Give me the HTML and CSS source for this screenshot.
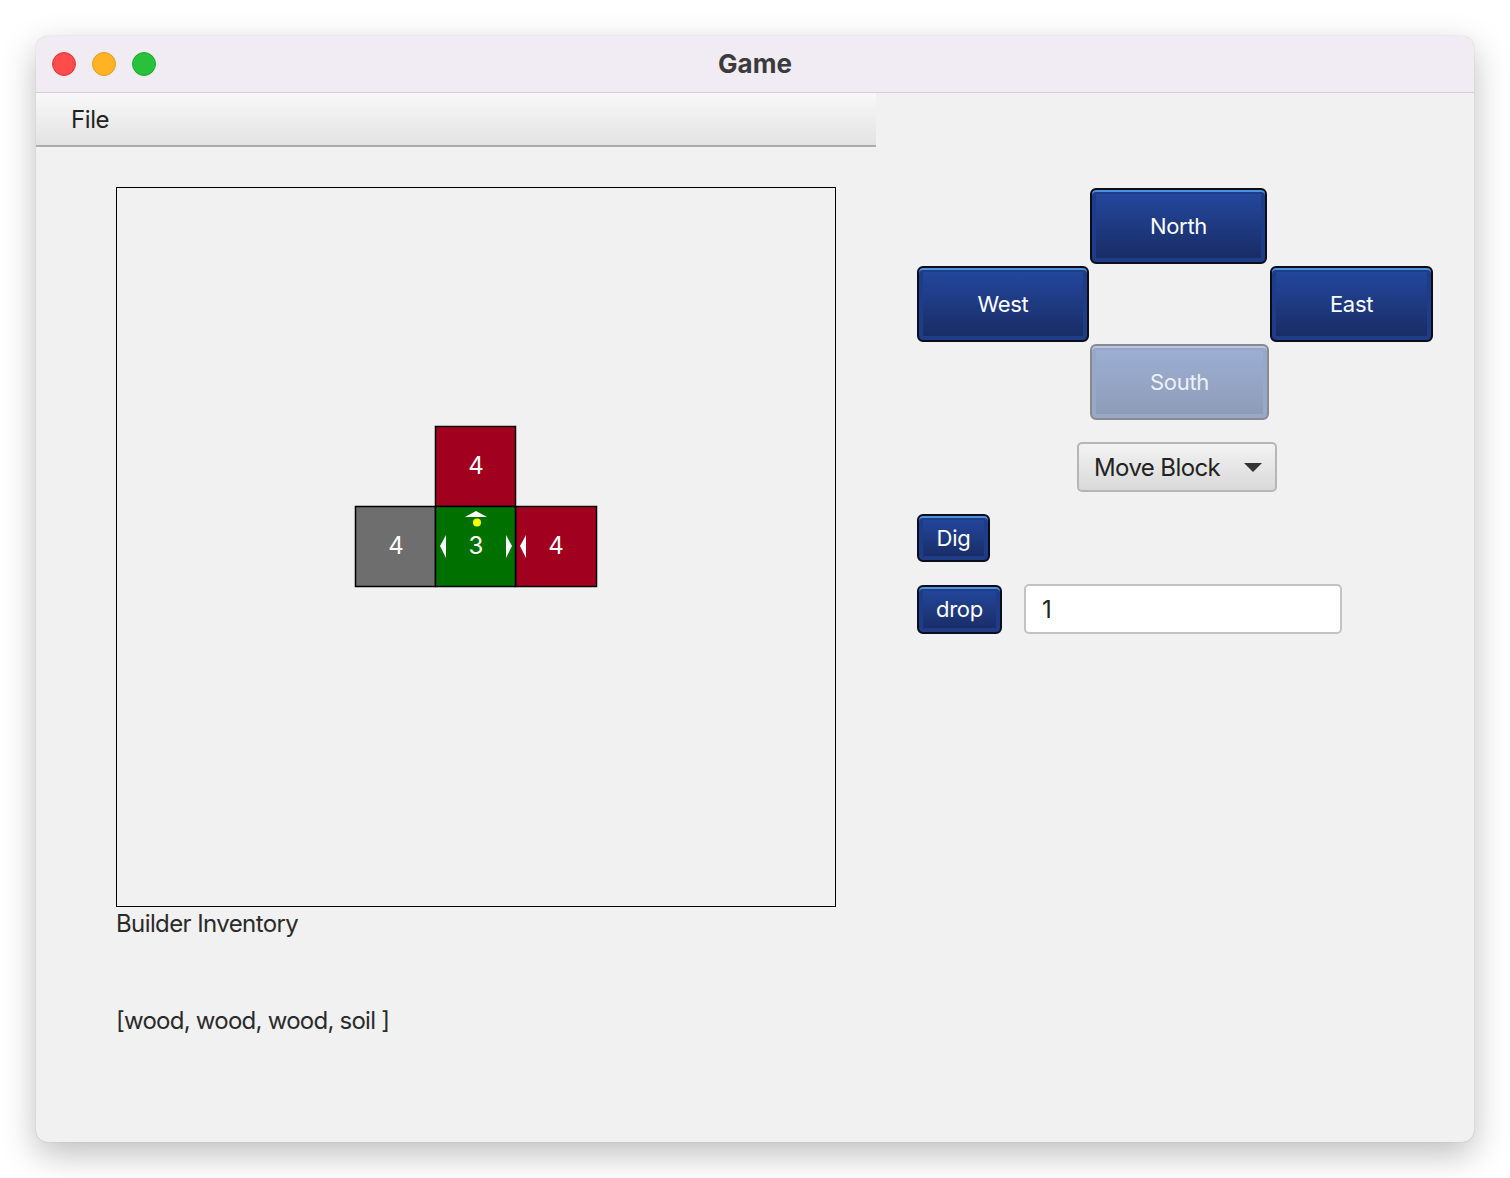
FILE: index.html
```html
<!DOCTYPE html>
<html>
<head>
<meta charset="utf-8">
<title>Game</title>
<link rel="stylesheet" href="styles.css">
</head>
<body>
<div class="window">
  <div class="titlebar">
    <div class="lights">
      <span class="light red"></span>
      <span class="light yellow"></span>
      <span class="light green"></span>
    </div>
    <div class="title">Game</div>
    <div></div>
  </div>
  <div class="main">
    <div class="left">
      <div class="menubar"><span class="menu">File</span></div>
      <div class="board-area">
        <div class="canvas">
          <svg class="board" width="718" height="718" viewBox="117 188 718 718" xmlns="http://www.w3.org/2000/svg">
            <rect x="435.5" y="426.5" width="80" height="80" fill="#a2001f" stroke="#000" stroke-width="1.5"/>
            <rect x="355.5" y="506.5" width="80" height="80" fill="#6e6e6e" stroke="#000" stroke-width="1.5"/>
            <rect x="515.5" y="506.5" width="81" height="80" fill="#a2001f" stroke="#000" stroke-width="1.5"/>
            <rect x="435.5" y="506.5" width="80" height="80" fill="#007100" stroke="#000" stroke-width="1.5"/>
            <g class="num">
              <text x="476" y="474">4</text>
              <text x="396" y="554">4</text>
              <text x="476" y="554">3</text>
              <text x="556" y="554">4</text>
            </g>
            <polygon points="465,517 476,511 487,517" fill="#fff"/>
            <circle cx="477" cy="522.5" r="4" fill="#ffff00"/>
            <polygon points="446,535 440,546 446,558" fill="#fff"/>
            <polygon points="506,535 512,546 506,558" fill="#fff"/>
            <polygon points="526,535 520,546 526,558" fill="#fff"/>
          </svg>
        </div>
        <div class="label">Builder Inventory</div>
        <div class="inventory">[wood, wood, wood, soil ]</div>
      </div>
    </div>
    <div class="right">
      <div class="compass">
        <button class="btn north">North</button>
        <button class="btn west">West</button>
        <button class="btn east">East</button>
        <button class="btn south" disabled>South</button>
      </div>
      <div class="select">
        <span>Move Block</span>
        <span class="caret"></span>
      </div>
      <div class="row-dig">
        <button class="btn dig">Dig</button>
      </div>
      <div class="row-drop">
        <button class="btn drop">drop</button>
        <div class="field">1</div>
      </div>
    </div>
  </div>
</div>
</body>
</html>
```
FILE: styles.css
```css
html, body {
  margin: 0;
  padding: 0;
  background: #ffffff;
}
body {
  font-family: Inter, "Noto Sans", "Liberation Sans", sans-serif;
  color: #222;
  height: 1178px;
}
.window {
  margin: 36px 0 0 36px;
  width: 1438px;
  height: 1106px;
  border-radius: 12px;
  overflow: hidden;
  background: #f1f1f1;
  box-shadow: 0 12px 34px rgba(0, 0, 0, 0.26), 0 0 1px rgba(0, 0, 0, 0.3);
  display: flex;
  flex-direction: column;
}
.titlebar {
  height: 56px;
  flex: none;
  background: #f1ecf4;
  border-bottom: 1px solid #d2ced6;
  display: grid;
  grid-template-columns: 1fr auto 1fr;
  align-items: center;
}
.lights {
  display: flex;
  gap: 16px;
  padding-left: 16px;
}
.light {
  width: 22px;
  height: 22px;
  border-radius: 50%;
  display: block;
}
.light.red { background: #ff4b4c; border: 1px solid #e2403f; }
.light.yellow { background: #ffb224; border: 1px solid #e09c1f; }
.light.green { background: #28c23a; border: 1px solid #1fa92c; }
.title {
  font-weight: 700;
  font-size: 26px;
  color: #3b3b3b;
  letter-spacing: 0;
  margin-top: -2px;
}
.main {
  flex: 1;
  display: flex;
}
.left {
  width: 840px;
  flex: none;
}
.menubar {
  height: 52px;
  border-bottom: 2px solid #acacac;
  background: linear-gradient(#f8f8f8, #e3e3e3);
  display: flex;
  align-items: center;
  padding-left: 35px;
}
.menu {
  font-size: 24px;
  color: #222;
  letter-spacing: -0.4px;
}
.board-area {
  padding: 40px 0 0 80px;
}
.canvas {
  width: 718px;
  height: 718px;
  border: 1px solid #000;
}
.board {
  display: block;
}
.num text {
  fill: #ffffff;
  font-family: Inter, "Noto Sans", "Liberation Sans", sans-serif;
  font-size: 24px;
  text-anchor: middle;
}
.label {
  font-size: 24px;
  line-height: 34px;
  letter-spacing: -0.6px;
  color: #2a2a2a;
}
.inventory {
  margin-top: 63px;
  font-size: 24px;
  line-height: 34px;
  letter-spacing: -0.75px;
  color: #2a2a2a;
}
.right {
  padding: 95px 0 0 41px;
}
.compass {
  display: grid;
  grid-template-columns: 173px 180px 164px;
  grid-template-rows: 76px 76px 76px;
  row-gap: 2px;
}
.btn {
  font-family: Inter, "Noto Sans", "Liberation Sans", sans-serif;
  font-size: 22px;
  color: #ffffff;
  letter-spacing: -0.3px;
  border: 2px solid #0b0d18;
  border-radius: 6px;
  background: linear-gradient(#24489f, #182b62);
  box-shadow: inset 0 2px 0 #4b92dc, inset 0 0 0 4px #1f3c88;
  padding: 0;
  margin: 0;
  height: 100%;
}
.north { grid-column: 2; grid-row: 1; width: 177px; }
.west { grid-column: 1; grid-row: 2; width: 172px; }
.east { grid-column: 3; grid-row: 2; width: 163px; }
.south {
  grid-column: 2; grid-row: 3; width: 179px;
  color: #eef1f8;
  border-color: #8a8a8e;
  background: linear-gradient(#9cb0d4, #8e9bb6);
  box-shadow: inset 0 2px 0 #b6c8e4, inset 0 0 0 4px #97a8c8;
}
.select {
  margin: 22px 0 0 160px;
  box-sizing: border-box;
  width: 200px;
  height: 50px;
  border: 2px solid #b6b6b6;
  border-radius: 5px;
  background: linear-gradient(#f3f3f3, #d9d9d9);
  display: flex;
  align-items: center;
  padding-left: 15px;
  font-size: 24px;
  color: #222;
  letter-spacing: -0.6px;
}
.caret {
  width: 0;
  height: 0;
  border-left: 9px solid transparent;
  border-right: 9px solid transparent;
  border-top: 9px solid #333;
  margin-left: 24px;
}
.row-dig {
  margin-top: 22px;
  height: 48px;
  display: flex;
}
.dig { width: 73px; height: 48px; }
.row-drop {
  margin-top: 22px;
  display: flex;
  align-items: center;
  gap: 22px;
}
.drop { width: 85px; height: 49px; }
.field {
  width: 318px;
  height: 50px;
  box-sizing: border-box;
  border: 2px solid #c3c3c3;
  border-radius: 5px;
  background: #fff;
  font-size: 24px;
  color: #222;
  display: flex;
  align-items: center;
  padding-left: 16px;
}
```
